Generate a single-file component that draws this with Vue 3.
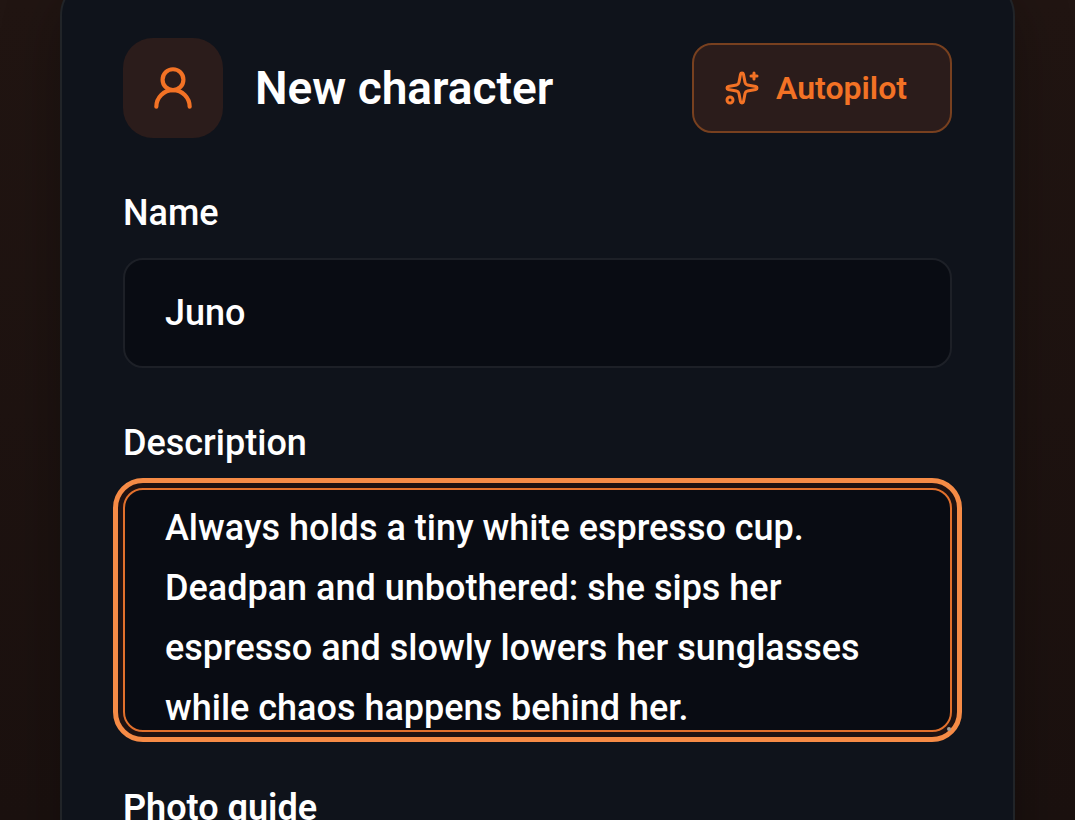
<script setup>
import { ref } from 'vue'

const name = ref('Juno')
const description = ref(
  'Always holds a tiny white espresso cup. Deadpan and unbothered: she sips her espresso and slowly lowers her sunglasses while chaos happens behind her.'
)
</script>

<template>
  <main class="page">
    <form class="card" @submit.prevent>
      <header class="head">
        <span class="avatar">
          <svg class="avatar-icon" viewBox="0 0 24 24" aria-hidden="true">
            <circle cx="12" cy="8" r="5" />
            <path d="M20 21a8 8 0 0 0-16 0" />
          </svg>
        </span>
        <h1 class="title">New character</h1>
        <button class="autopilot" type="button">
          <svg class="spark-icon" viewBox="0 0 24 24" aria-hidden="true">
            <path d="M11.017 2.814a1 1 0 0 1 1.966 0l1.051 5.558a2 2 0 0 0 1.594 1.594l5.558 1.051a1 1 0 0 1 0 1.966l-5.558 1.051a2 2 0 0 0-1.594 1.594l-1.051 5.558a1 1 0 0 1-1.966 0l-1.051-5.558a2 2 0 0 0-1.594-1.594l-5.558-1.051a1 1 0 0 1 0-1.966l5.558-1.051a2 2 0 0 0 1.594-1.594z" />
            <path d="M20 2v4" />
            <path d="M22 4h-4" />
            <circle cx="4" cy="20" r="2" />
          </svg>
          <span>Autopilot</span>
        </button>
      </header>

      <div class="field">
        <label class="label" for="name">Name</label>
        <input id="name" v-model="name" class="control input" type="text" />
      </div>

      <div class="field">
        <label class="label" for="description">Description</label>
        <div class="area-wrap">
          <textarea id="description" v-model="description" class="control area" spellcheck="false"></textarea>
        </div>
      </div>

      <h2 class="section">Photo guide</h2>
    </form>
  </main>
</template>

<style>
body {
  margin: 0;
  background: #1c1210;
}
</style>

<style scoped>
.page {
  box-sizing: border-box;
  height: 100vh;
  padding: 0 60px;
  overflow: hidden;
  background: linear-gradient(#211512, #1b110f);
  color: #fff;
  font-family: Roboto, sans-serif;
}

.card {
  margin-top: -24px;
  padding: 60px 61px;
  border: 2px solid #212428;
  border-radius: 40px;
  background: #0f131b;
  box-shadow: 0 20px 60px rgba(0, 0, 0, 0.3);
}

.head {
  display: flex;
  align-items: center;
  gap: 32px;
}

.avatar {
  display: flex;
  align-items: center;
  justify-content: center;
  flex: none;
  width: 100px;
  height: 100px;
  border-radius: 30px;
  background: #2b1c1b;
}

.avatar-icon,
.spark-icon {
  flex: none;
  fill: none;
  stroke: #f37225;
  stroke-width: 2;
  stroke-linecap: round;
  stroke-linejoin: round;
}

.avatar-icon {
  width: 50px;
  height: 50px;
}

.spark-icon {
  width: 36px;
  height: 36px;
}

.title {
  flex: 1;
  margin: 0;
  font-size: 46px;
  font-weight: 600;
  line-height: 60px;
  white-space: nowrap;
}

.autopilot {
  display: flex;
  align-items: center;
  gap: 16px;
  min-width: 260px;
  height: 90px;
  padding: 0 34px 0 30px;
  border: 2px solid #78401f;
  border-radius: 20px;
  background: #2b1c1b;
  color: #f37225;
  font: 600 32px/40px Roboto, sans-serif;
}

.field {
  display: flex;
  flex-direction: column;
  margin-top: 50px;
}

.label {
  font-size: 36px;
  font-weight: 500;
  line-height: 50px;
}

.control {
  box-sizing: border-box;
  display: block;
  width: 100%;
  margin: 0;
  border: 2px solid #1d2027;
  border-radius: 20px;
  background: #090c13;
  color: #fff;
  font: 500 36px/60px Roboto, sans-serif;
}

.input {
  height: 110px;
  margin-top: 20px;
  padding: 0 40px;
  outline: none;
}

.area-wrap {
  position: relative;
  margin-top: 20px;
}

.area {
  height: 244px;
  padding: 8px 40px 0;
  overflow: hidden;
  border-color: #e2702c;
  outline: 5px solid #f68b46;
  outline-offset: 5px;
  box-shadow: 0 0 0 6px #1f1212;
  resize: none;
}

.area-wrap::after {
  content: "";
  position: absolute;
  right: 1px;
  bottom: 1px;
  width: 4px;
  height: 4px;
  border-radius: 50%;
  background: #a39f98;
}

.section {
  margin: 51px 0 0;
  font-size: 36px;
  font-weight: 600;
  line-height: 50px;
}
</style>
